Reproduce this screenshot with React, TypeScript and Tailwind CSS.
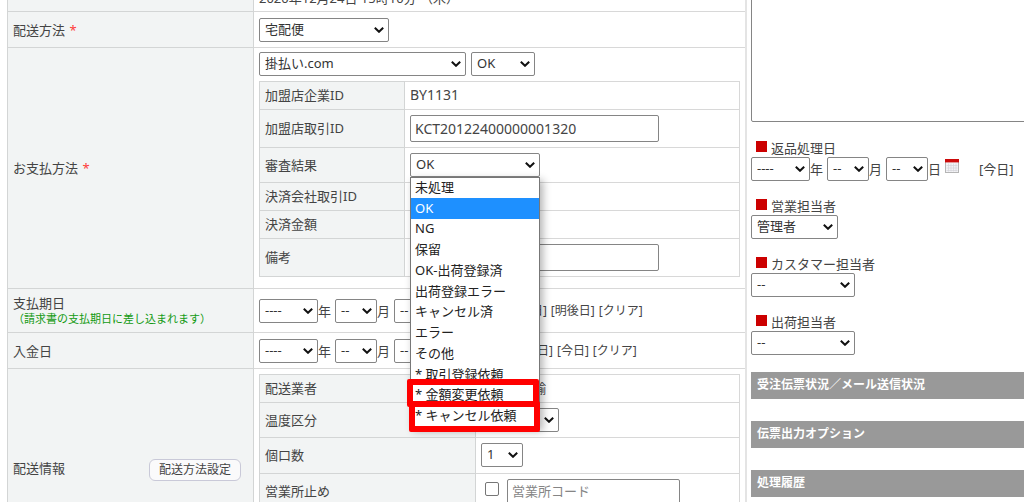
import { useState } from 'react'
import type { ReactNode } from 'react'

const resultOptions = [
  '未処理',
  'OK',
  'NG',
  '保留',
  'OK-出荷登録済',
  '出荷登録エラー',
  'キャンセル済',
  'エラー',
  'その他',
  '* 取引登録依頼',
  '* 金額変更依頼',
  '* キャンセル依頼'
]

const staffFields = [
  { id: 'sales', label: '営業担当者', value: '管理者', width: 'w-[87px]' },
  { id: 'customer', label: 'カスタマー担当者', value: '--', width: 'w-[104px]' },
  { id: 'shipping', label: '出荷担当者', value: '--', width: 'w-[104px]' }
]

const panels = ['受注伝票状況／メール送信状況', '伝票出力オプション', '処理履歴']

type SelectProps = {
  label: string
  options: string[]
  width: string
  id?: string
}

function Select({ label, options, width, id }: SelectProps) {
  return (
    <span className={`relative flex shrink-0 ${width}`}>
      <select
        id={id}
        aria-label={label}
        className="h-6 w-full appearance-none rounded-xs border border-[#858585] bg-white pb-0.5 pl-[5px] pr-4 text-[13px] leading-5 text-[#333]"
      >
        {options.map((option) => (
          <option key={option}>{option}</option>
        ))}
      </select>
      <svg
        viewBox="0 0 10 6"
        className="pointer-events-none absolute right-[5px] top-[9px] h-[6px] w-[10px]"
        fill="none"
        stroke="#111"
        strokeWidth="2"
      >
        <path d="M0.8 0.8 L5 4.8 L9.2 0.8" />
      </svg>
    </span>
  )
}

function CalendarIcon() {
  return (
    <svg viewBox="0 0 14 14" className="mb-1.5 h-[14px] w-[14px]">
      <rect x="0.5" y="0.5" width="13" height="13" fill="#f3f3f6" stroke="#b5b5b5" />
      <path d="M3.5 4.5v8M6 4.5v8M8.5 4.5v8M11 4.5v8M1.5 6.5h11M1.5 9h11M1.5 11.5h11" stroke="#d4d4da" strokeWidth="0.7" />
      <rect width="14" height="3.4" fill="#cc0a0a" />
    </svg>
  )
}

function DateFields({ name, children }: { name: string; children?: ReactNode }) {
  return (
    <div className="flex items-center whitespace-nowrap">
      <Select label={`${name} 年`} options={['----']} width="w-[59px]" />
      <span className="mr-1">年</span>
      <Select label={`${name} 月`} options={['--']} width="w-[42px]" />
      <span className="mr-1">月</span>
      <Select label={`${name} 日`} options={['--']} width="w-[42px]" />
      <span className="mr-1">日</span>
      {children}
    </div>
  )
}

function Row({ label, height, children }: { label: ReactNode; height: string; children?: ReactNode }) {
  return (
    <tr className={height}>
      <th className="border border-[#d3d5d5] bg-[#f2f4f4] px-[5px] text-left font-normal">{label}</th>
      <td className="border border-[#d8d8d8] px-[5px]">{children}</td>
    </tr>
  )
}

function Required({ children }: { children: ReactNode }) {
  return (
    <>
      {children} <span className="ml-px text-[#ff3b3b]">*</span>
    </>
  )
}

function ResultSelect() {
  const [selected, setSelected] = useState('OK')

  return (
    <div className="relative w-[130px]">
      <Select id="result" label="審査結果" options={['OK']} width="w-[130px]" />
      <div
        role="listbox"
        aria-label="審査結果"
        className="absolute left-0 top-6 z-10 flex h-[251px] w-[130px] flex-col border border-[#777] bg-white text-[#222] shadow-[3px_3px_8px_rgba(0,0,0,0.3)]"
      >
        {resultOptions.map((option) => (
          <button
            key={option}
            role="option"
            aria-selected={option === selected}
            onClick={() => setSelected(option)}
            className={`flex min-h-0 flex-1 items-center whitespace-nowrap pb-0.5 pl-1 text-left ${
              option === selected ? 'bg-[#1e90ff] text-white' : ''
            }`}
          >
            {option}
          </button>
        ))}
        {/* Highlighted request options */}
        <span className="pointer-events-none absolute -left-1 top-[201px] h-7 w-[132px] rounded-xs border-6 border-[#ff0000]" />
        <span className="pointer-events-none absolute -left-0.5 top-[223px] h-[31px] w-[131px] rounded-xs border-6 border-[#ff0000]" />
      </div>
    </div>
  )
}

export default function App() {
  return (
    <main className="h-screen overflow-hidden bg-white font-['Noto_Sans','Noto_Sans_CJK_JP',sans-serif] text-[13px] leading-[18px] text-[#444]">
      {/* Page is scrolled, so the first row is cut at the top */}
      <div className="-mt-6 flex gap-1 pl-[7px]">
        <section className="min-w-0 flex-1">
          <table className="w-full table-fixed border-collapse border-r-2 border-[#e4e4e4]">
            <colgroup>
              <col className="w-[246px]" />
              <col />
            </colgroup>
            <tbody>
              <Row label="" height="h-[35px]">
                <div className="pt-2">2020年12月24日 15時10分 （木）</div>
              </Row>
              <Row label={<Required>配送方法</Required>} height="h-9">
                <Select label="配送方法" options={['宅配便']} width="w-[130px]" />
              </Row>
              <Row label={<Required>お支払方法</Required>} height="h-[241px]">
                <div className="flex gap-[5px] pb-[5px]">
                  <Select label="お支払方法" options={['掛払い.com']} width="w-[207px]" />
                  <Select label="支払状況" options={['OK']} width="w-16" />
                </div>
                <table className="mb-2 w-full table-fixed border-collapse">
                  <colgroup>
                    <col className="w-[145px]" />
                    <col />
                  </colgroup>
                  <tbody>
                    <Row label="加盟店企業ID" height="h-7">
                      <span className="text-sm">BY1131</span>
                    </Row>
                    <Row label={<label htmlFor="deal">加盟店取引ID</label>} height="h-[38px]">
                      <input
                        id="deal"
                        defaultValue="KCT20122400000001320"
                        className="block h-[27px] w-[249px] rounded-xs border border-[#858585] px-1 text-sm"
                      />
                    </Row>
                    <Row label={<label htmlFor="result">審査結果</label>} height="h-[35px]">
                      <ResultSelect />
                    </Row>
                    <Row label="決済会社取引ID" height="h-7" />
                    <Row label="決済金額" height="h-7" />
                    <Row label={<label htmlFor="note">備考</label>} height="h-[38px]">
                      <input
                        id="note"
                        className="block h-[27px] w-[249px] rounded-xs border border-[#858585] px-1 text-sm"
                      />
                    </Row>
                  </tbody>
                </table>
              </Row>
              <Row
                label={
                  <>
                    <div className="leading-4">支払期日</div>
                    <div className="text-[11px] leading-4 text-[#129a12]">（請求書の支払期日に差し込まれます）</div>
                  </>
                }
                height="h-11"
              >
                <DateFields name="支払期日">
                  <CalendarIcon />
                  <span className="ml-3 flex gap-1 text-xs">
                    <a href="#today">[今日]</a>
                    <a href="#tomorrow">[明日]</a>
                    <a href="#day-after">[明後日]</a>
                    <a href="#clear">[クリア]</a>
                  </span>
                </DateFields>
              </Row>
              <Row label="入金日" height="h-9">
                <DateFields name="入金日">
                  <CalendarIcon />
                  <span className="ml-[54px] flex gap-1 text-xs">
                    <a href="#prev">[前日]</a>
                    <a href="#today">[今日]</a>
                    <a href="#clear">[クリア]</a>
                  </span>
                </DateFields>
              </Row>
              <Row
                label={
                  <div className="flex items-center justify-between pr-[7px]">
                    <span>配送情報</span>
                    <button className="mt-1 h-[22px] rounded-md border border-[#c9c9d8] bg-[#fafafb] px-[9px] text-xs">
                      配送方法設定
                    </button>
                  </div>
                }
                height="h-[198px]"
              >
                <table className="w-full table-fixed border-collapse">
                  <colgroup>
                    <col className="w-[216px]" />
                    <col />
                  </colgroup>
                  <tbody>
                    <Row label="配送業者" height="h-7">
                      ヤマト運輸
                    </Row>
                    <Row label="温度区分" height="h-[35px]">
                      <Select label="温度区分" options={['常温']} width="w-[78px]" />
                    </Row>
                    <Row label="個口数" height="h-9">
                      <Select label="個口数" options={['1']} width="w-[42px]" />
                    </Row>
                    <Row label={<label htmlFor="office">営業所止め</label>} height="h-9">
                      <div className="flex items-center gap-2 pl-1">
                        <input
                          id="office"
                          type="checkbox"
                          className="mb-1 h-[14px] w-[14px] appearance-none rounded-xs border border-[#767676]"
                        />
                        <input
                          aria-label="営業所コード"
                          placeholder="営業所コード"
                          className="h-[25px] w-[173px] rounded-xs border border-[#858585] px-1 placeholder:text-[#858585]"
                        />
                      </div>
                    </Row>
                    <Row label="" height="h-[52px]" />
                  </tbody>
                </table>
              </Row>
            </tbody>
          </table>
        </section>

        <aside className="w-[273px] shrink-0">
          <textarea
            aria-label="メモ"
            className="block h-[146px] w-[290px] resize-none rounded-xs border border-[#858585]"
          />
          <div className="mt-[17px] flex flex-col gap-4">
            <div>
              <div className="flex h-[18px] items-center gap-1 pl-[5px]">
                <span className="mb-[3px] h-[11px] w-[11px] bg-[#cc0000]" />
                返品処理日
              </div>
              <DateFields name="返品処理日">
                <CalendarIcon />
                <a href="#today" className="ml-5">
                  [今日]
                </a>
              </DateFields>
            </div>
            {staffFields.map((field) => (
              <div key={field.id}>
                <label htmlFor={field.id} className="flex h-[18px] items-center gap-1 pl-[5px]">
                  <span className="mb-[3px] h-[11px] w-[11px] bg-[#cc0000]" />
                  {field.label}
                </label>
                <Select id={field.id} label={field.label} options={[field.value]} width={field.width} />
              </div>
            ))}
          </div>
          <div className="mt-[17px] flex flex-col gap-[22px]">
            {panels.map((panel) => (
              <h2 key={panel} className="h-[27px] bg-[#999] px-[6px] text-xs font-bold leading-[26px] text-white">
                {panel}
              </h2>
            ))}
          </div>
        </aside>
      </div>
    </main>
  )
}
